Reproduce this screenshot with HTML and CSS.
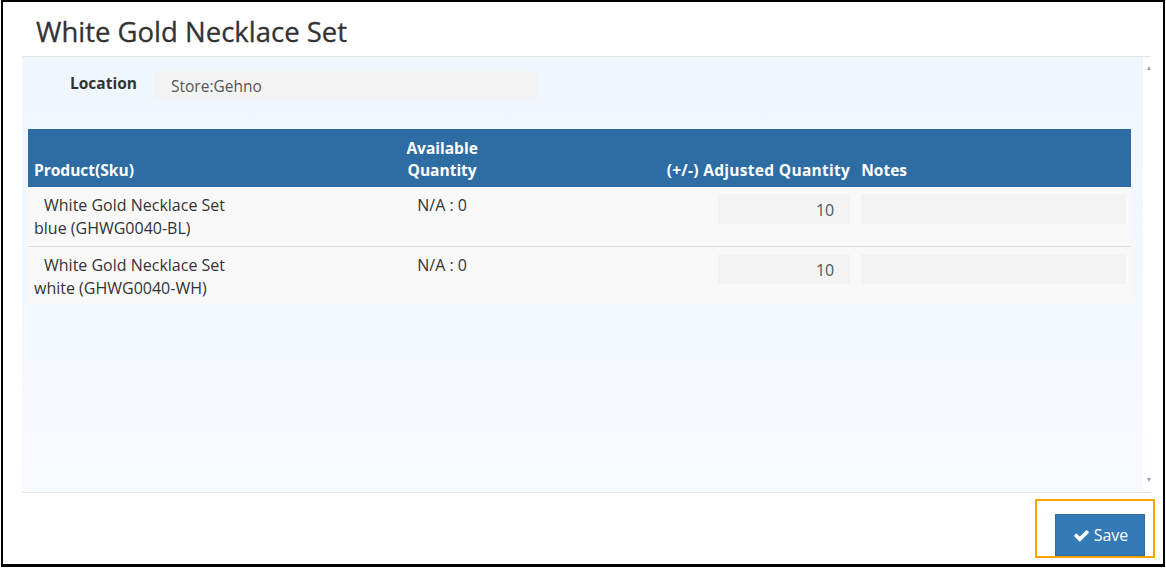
FILE: index.html
```html
<!DOCTYPE html>
<html>
<head>
<meta charset="utf-8">
<link rel="stylesheet" href="styles.css">
</head>
<body>
<div class="frame">
  <div class="modal-header">
    <h1 class="title">White Gold Necklace Set</h1>
  </div>
  <div class="modal-body">
    <div class="panel">
      <div class="loc-row">
        <label class="loc-label">Location</label>
        <div class="loc-input">Store:Gehno</div>
      </div>
      <table class="grid">
        <colgroup>
          <col class="c1"><col class="c2"><col class="c3"><col class="c4">
        </colgroup>
        <thead>
          <tr>
            <th class="th-left">Product(Sku)</th>
            <th class="th-center">Available<br>Quantity</th>
            <th class="th-right th-wide">(+/-) Adjusted Quantity</th>
            <th class="th-left">Notes</th>
          </tr>
        </thead>
        <tbody>
          <tr>
            <td><span class="indent">White Gold Necklace Set</span> blue (GHWG0040-BL)</td>
            <td class="td-center">N/A : 0</td>
            <td class="td-right"><div class="qty">10</div></td>
            <td><div class="notes"></div></td>
          </tr>
          <tr>
            <td><span class="indent">White Gold Necklace Set</span> white (GHWG0040-WH)</td>
            <td class="td-center">N/A : 0</td>
            <td class="td-right"><div class="qty">10</div></td>
            <td><div class="notes"></div></td>
          </tr>
        </tbody>
      </table>
    </div>
    <div class="scrollbar">
      <span class="arrow-up"></span>
      <span class="arrow-down"></span>
    </div>
  </div>
  <div class="modal-footer">
    <div class="focus-wrap">
      <button class="btn-save"><svg class="check" viewBox="0 0 1792 1792" width="19" height="17"><path fill="#fff" d="M1671 566q0 40-28 68l-724 724-136 136q-28 28-68 28t-68-28l-136-136-362-362q-28-28-28-68t28-68l136-136q28-28 68-28t68 28l294 295 656-657q28-28 68-28t68 28l136 136q28 28 28 68z"/></svg><span>Save</span></button>
    </div>
  </div>
</div>
</body>
</html>
```

FILE: styles.css
```css
* { box-sizing: border-box; }
html, body { margin: 0; padding: 0; background: #fff; }
body {
  font-family: "Open Sans", "Noto Sans", sans-serif;
  color: #333;
  padding-left: 1px;
  height: 569px;
  overflow: hidden;
}
.frame {
  width: 1164px;
  height: 567px;
  border: 2px solid #000;
  border-bottom-width: 3px;
  background: #fff;
}
.modal-header {
  margin-left: 19px;
  width: 1129px;
  height: 55px;
  border-bottom: 1px solid #e5e5e5;
  padding-left: 14px;
}
.title {
  margin: 0;
  padding-top: 13px;
  font-size: 27.5px;
  font-weight: 400;
  line-height: 34px;
  color: #333;
  letter-spacing: 0;
  -webkit-text-stroke: 0.3px #333;
}
.modal-body {
  margin-left: 19px;
  width: 1129px;
  height: 436px;
  border-bottom: 1px solid #e5e5e5;
  display: flex;
}
.panel {
  width: 1121px;
  height: 100%;
  background: linear-gradient(#eff6fd, #f8fbfe);
  padding-top: 14px;
  padding-left: 6px;
}
.scrollbar {
  width: 8px;
  height: 100%;
  background: #fff;
  position: relative;
}
.arrow-up, .arrow-down {
  position: absolute;
  left: 4px;
  width: 0; height: 0;
  border-left: 2px solid transparent;
  border-right: 2px solid transparent;
}
.arrow-up { top: 9px; border-bottom: 4px solid #a0a0a0; }
.arrow-down { bottom: 10px; border-top: 4px solid #a0a0a0; }

.loc-row {
  display: flex;
  align-items: flex-start;
  padding-left: 42px;
}
.loc-label {
  width: 84px;
  font-size: 15.5px;
  font-weight: 700;
  line-height: 22px;
  padding-top: 1px;
}
.loc-input {
  width: 384px;
  height: 29px;
  background: #f3f3f3;
  padding-left: 17px;
  font-size: 15.5px;
  line-height: 31px;
  color: #555;
}

.grid {
  margin-top: 29px;
  width: 1103px;
  border-collapse: collapse;
  table-layout: fixed;
  font-size: 16px;
}
.c1 { width: 20%; }
.c2 { width: 35%; }
.c3 { width: 20%; }
.c4 { width: 25%; }
.grid thead tr { background: #2e6da4; height: 58px; }
.grid th {
  color: #fff;
  font-weight: 700;
  font-size: 15.5px;
  line-height: 22px;
  vertical-align: bottom;
  padding: 0 5px 6px 6px;
  white-space: nowrap;
}
.th-left { text-align: left; }
.th-center { text-align: center; }
.th-right { text-align: right; }
.th-wide { letter-spacing: 0.3px; padding-right: 4px; }
.grid tbody tr { background: #f9f9f9; border-bottom: 1px solid #ddd; }
.grid tbody tr:last-child { border-bottom: none; }
.grid td {
  vertical-align: top;
  padding: 7px 5px 5px 6px;
  font-size: 16px;
  line-height: 23px;
  color: #333;
  height: 59px;
}
.indent { padding-left: 10px; }
.td-center { text-align: center; }
.td-right { text-align: right; }
.qty {
  display: inline-block;
  width: 132px;
  height: 30px;
  background: #f3f3f3;
  text-align: right;
  padding-right: 16px;
  line-height: 32px;
  font-size: 16px;
  color: #555;
  vertical-align: top;
}
.notes {
  width: 265px;
  height: 30px;
  background: #f3f3f3;
}

.modal-footer {
  display: flex;
  justify-content: flex-end;
  padding-top: 6px;
  padding-right: 8px;
}
.focus-wrap {
  border: 2px solid #ffa500;
  padding: 13px 8px 0 18px;
  height: 59px;
}
.btn-save {
  width: 90px;
  height: 42px;
  background: #337ab7;
  border: 1px solid #2e6da4;
  color: #fff;
  font-family: "Open Sans", "Noto Sans", sans-serif;
  font-size: 16px;
  display: flex;
  align-items: center;
  justify-content: center;
  gap: 3px;
  padding: 0;
}
.check { display: block; }
```
